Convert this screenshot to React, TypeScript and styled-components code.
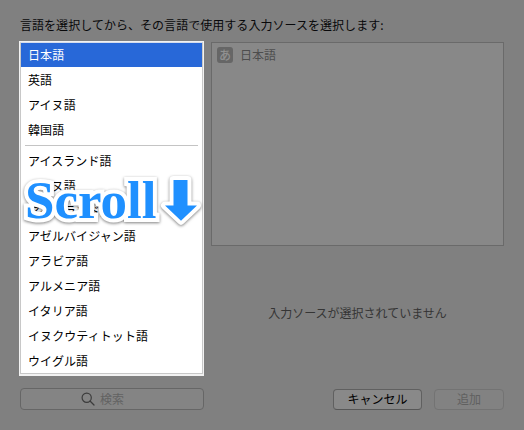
import React from "react";
import styled, { createGlobalStyle } from "styled-components";

const Global = createGlobalStyle`
  * { box-sizing: border-box; }
  body {
    margin: 0;
    background: #808080;
    font: 12px/25px "Noto Sans CJK JP", sans-serif;
    color: #000;
  }
`;

const Dialog = styled.main`
  width: 524px;
  height: 430px;
  padding: 12px 20px 0 19px;
  overflow: hidden;
  background: #808080;
`;

const Title = styled.h1`
  margin: 0 0 4px 1px;
  height: 25px;
  font-size: 12px;
  font-weight: 400;
  letter-spacing: 0.04px;
  white-space: nowrap;
  color: #08080a;
`;

const Columns = styled.div`
  display: flex;
  gap: 7px;
  height: 335px;
`;

const LanguagePane = styled.section`
  position: relative;
  width: 185px;
  height: 335px;
  padding: 1px;
  background: #f2f2f2;
`;

const LanguageList = styled.ul`
  list-style: none;
  margin: 0;
  height: 332px;
  padding: 0;
  border: 1px solid #c8c8c8;
  border-top-color: #d5dcec;
  background: #fff;
  overflow: hidden;
`;

const Language = styled.li<{ $selected?: boolean }>`
  height: 25px;
  padding-left: 7px;
  line-height: 23px;
  letter-spacing: 0.08px;
  white-space: nowrap;
  color: ${(p) => (p.$selected ? "#fff" : "#000")};
  background: ${(p) =>
    p.$selected ? "linear-gradient(#2868d8 24px, #fff 24px)" : "transparent"};
`;

const Separator = styled.li`
  height: 6px;
  padding: 2px 4px 0;

  &::before {
    content: "";
    display: block;
    height: 1px;
    background: #c4c4c4;
  }
`;

const ScrollHint = styled.div`
  position: absolute;
  left: 6px;
  top: 129px;
  display: flex;
  align-items: flex-start;
  filter: drop-shadow(0 1px 1.5px rgba(0, 0, 0, 0.5));
`;

const HintText = styled.span`
  width: 136px;
  font: bold 53px/60px "Liberation Serif", serif;
  color: #1f90ff;
  -webkit-text-stroke: 8px #fff;
  paint-order: stroke fill;
  stroke-linejoin: round;
`;

const HintArrow = styled.svg`
  width: 46px;
  height: 56px;
  margin-top: 3px;
  overflow: visible;
`;

const SourceColumn = styled.section`
  width: 293px;
`;

const SourceList = styled.div`
  display: flex;
  align-items: flex-start;
  height: 204px;
  margin-top: 1px;
  padding: 4px 5px;
  border: 1px solid #6a6a6a;
  background: #888;
  color: #4d4d4d;
`;

const KanaBadge = styled.span`
  width: 16px;
  height: 16px;
  margin: 0 7px 0 0;
  border-radius: 3px;
  background: #666;
  color: #919191;
  font-size: 12px;
  font-weight: 500;
  line-height: 15px;
  text-align: center;
`;

const SourceName = styled.span`
  height: 18px;
  line-height: 16px;
`;

const EmptyMessage = styled.p`
  margin: 54px 0 0;
  height: 25px;
  text-align: center;
  color: #353535;
`;

const Footer = styled.footer`
  display: flex;
  align-items: center;
  height: 22px;
  margin: 12px 0 0 1px;
`;

const SearchField = styled.div`
  display: flex;
  align-items: center;
  justify-content: center;
  width: 184px;
  height: 22px;
  margin-right: 129px;
  border: 1px solid #666;
  border-radius: 4px;
  background: #848484;
  color: #626262;
  line-height: 20px;
`;

const SearchIcon = styled.svg`
  width: 14px;
  height: 14px;
  margin: 0 5px 0 -19px;
`;

const Button = styled.button<{ $width: number }>`
  width: ${(p) => p.$width}px;
  height: 21px;
  margin: 0 12px 0 0;
  padding: 0;
  border: 1px solid #606060;
  border-bottom-color: #575757;
  border-radius: 4px;
  background: #898989;
  color: #000;
  font: 12px/18px "Noto Sans CJK JP", sans-serif;

  &:disabled {
    margin-right: 0;
    border-color: #737373;
    background: #828282;
    color: #606060;
  }
`;

const preferred = ["日本語", "英語", "アイヌ語", "韓国語"];
const languages = [
  "アイスランド語",
  "アイヌ語",
  "アイルランド語",
  "アゼルバイジャン語",
  "アラビア語",
  "アルメニア語",
  "イタリア語",
  "イヌクウティトット語",
  "ウイグル語",
];

export default function App() {
  return (
    <>
      <Global />
      <Dialog>
        <Title>言語を選択してから、その言語で使用する入力ソースを選択します:</Title>
        <Columns>
          <LanguagePane>
            <LanguageList>
              {preferred.map((name, i) => (
                <Language key={name} $selected={i === 0}>{name}</Language>
              ))}
              <Separator />
              {languages.map((name) => (
                <Language key={name}>{name}</Language>
              ))}
            </LanguageList>
            <ScrollHint>
              <HintText>Scroll</HintText>
              <HintArrow viewBox="0 0 46 56">
                <path
                  d="M12.5 7H26.500V32.500H36L20 47.700L4 32.500H12.500Z"
                  fill="#1f90ff"
                  stroke="#fff"
                  strokeWidth="8"
                  strokeLinejoin="round"
                  paintOrder="stroke"
                />
              </HintArrow>
            </ScrollHint>
          </LanguagePane>
          <SourceColumn>
            <SourceList>
              <KanaBadge>あ</KanaBadge>
              <SourceName>日本語</SourceName>
            </SourceList>
            <EmptyMessage>入力ソースが選択されていません</EmptyMessage>
          </SourceColumn>
        </Columns>
        <Footer>
          <SearchField>
            <SearchIcon viewBox="0 0 14 14" fill="none" stroke="#3c3c3c" strokeWidth="1.2">
              <circle cx="5.700" cy="5.700" r="4.600" />
              <path d="M9 9L13 13" strokeLinecap="round" />
            </SearchIcon>
            検索
          </SearchField>
          <Button $width={89}>キャンセル</Button>
          <Button $width={70} disabled>追加</Button>
        </Footer>
      </Dialog>
    </>
  );
}
